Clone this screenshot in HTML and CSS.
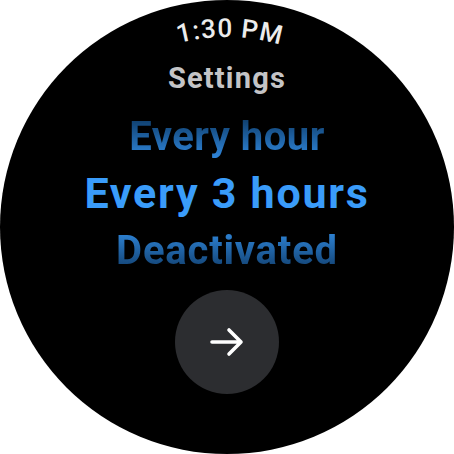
FILE: index.html
```html
<!DOCTYPE html>
<html>
<head>
<meta charset="utf-8">
<link rel="stylesheet" href="styles.css">
</head>
<body>
<div class="screen">
  <svg class="time" width="454" height="50" viewBox="0 0 454 50">
    <defs>
      <path id="arc" d="M 37 227 A 190 190 0 0 1 417 227"></path>
    </defs>
    <text class="time-text"><textPath href="#arc" startOffset="50.5%" text-anchor="middle">1:30 PM</textPath></text>
  </svg>
  <div class="title">Settings</div>
  <div class="picker">
    <div class="item item-above">Every hour</div>
    <div class="item item-selected">Every 3 hours</div>
    <div class="item item-below">Deactivated</div>
  </div>
  <button class="confirm" aria-label="Confirm">
    <svg width="34" height="34" viewBox="0 0 34 34">
      <path d="M2 17 H31 M19 5 L31 17 L19 29" fill="none" stroke="#ffffff" stroke-width="3.6" stroke-linecap="round" stroke-linejoin="round"></path>
    </svg>
  </button>
</div>
</body>
</html>
```
FILE: styles.css
```css
html, body {
  margin: 0;
  padding: 0;
  background: #ffffff;
}

.screen {
  width: 454px;
  height: 454px;
  border-radius: 50%;
  background: #000000;
  overflow: hidden;
  display: flex;
  flex-direction: column;
  align-items: center;
  font-family: Roboto, "Noto Sans", sans-serif;
}

.time {
  display: block;
  flex: none;
}

.time-text {
  font-family: Roboto, sans-serif;
  font-size: 26px;
  font-weight: 500;
  fill: #ececec;
  letter-spacing: 1px;
}

.title {
  margin-top: 10px;
  height: 36px;
  line-height: 36px;
  font-size: 29px;
  font-weight: 700;
  color: #c4c4c6;
  letter-spacing: 1.2px;
}

.picker {
  margin-top: 12px;
  display: flex;
  flex-direction: column;
  align-items: center;
}

.item {
  height: 57px;
  line-height: 57px;
  font-size: 40px;
  font-weight: 700;
  white-space: nowrap;
  letter-spacing: 0.5px;
  -webkit-background-clip: text;
  background-clip: text;
  color: transparent;
}

.item-above {
  background-image: linear-gradient(to bottom, #0d3a66 15%, #2e83d6 85%);
}

.item-selected {
  font-size: 43px;
  letter-spacing: 1.75px;
  background-image: none;
  color: #3a9cfa;
}

.item-below {
  letter-spacing: 0.8px;
  background-image: linear-gradient(to bottom, #2d81d2 20%, #0f3a66 90%);
}

.confirm {
  margin-top: 11px;
  width: 104px;
  height: 104px;
  border: none;
  border-radius: 50%;
  background: #2c2d30;
  padding: 0;
  display: flex;
  align-items: center;
  justify-content: center;
}

.confirm svg {
  display: block;
}
```
